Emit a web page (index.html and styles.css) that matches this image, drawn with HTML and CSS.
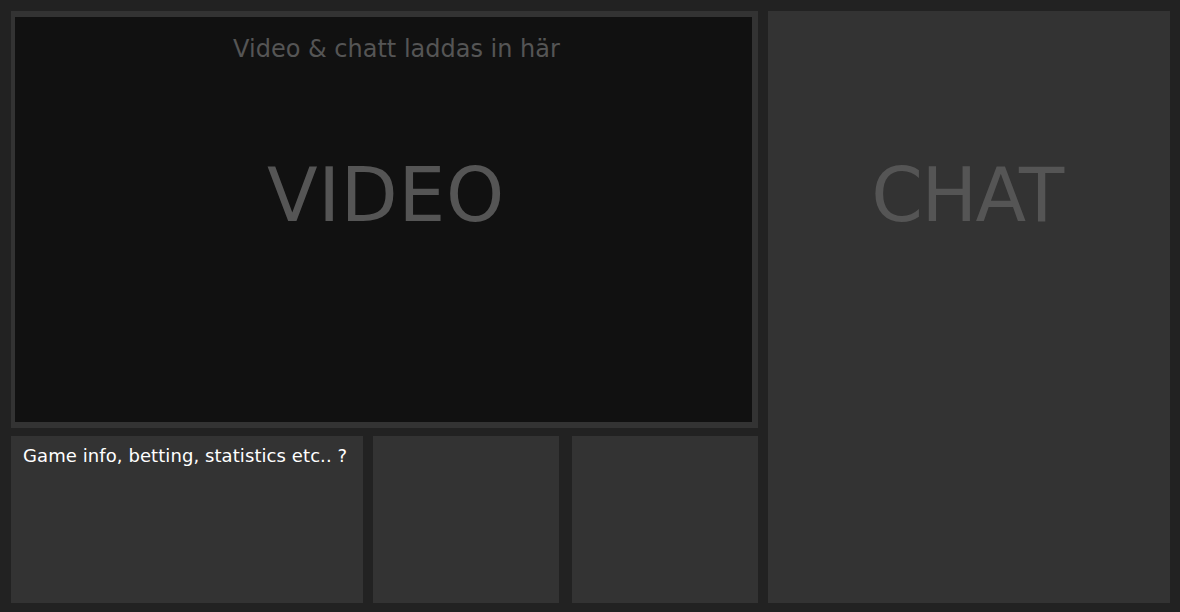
FILE: index.html
```html
<!DOCTYPE html>
<html>
<head>
<meta charset="utf-8">
<link rel="stylesheet" href="styles.css">
</head>
<body>
<div class="page">
  <div class="main">
    <div class="video">
      <div class="video-inner">
        <div class="title">Video &amp; chatt laddas in här</div>
        <div class="big video-label">VIDEO</div>
      </div>
    </div>
    <div class="bottom">
      <div class="box info">Game info, betting, statistics etc.. ?</div>
      <div class="box small"></div>
      <div class="box small last"></div>
    </div>
  </div>
  <div class="chat">
    <div class="big chat-label">CHAT</div>
  </div>
</div>
</body>
</html>
```
FILE: styles.css
```css
html, body {
  margin: 0;
  padding: 0;
  background: #222222;
  font-family: "DejaVu Sans", Verdana, sans-serif;
}
.page {
  width: 1180px;
  height: 612px;
  box-sizing: border-box;
  padding: 11px 10px 9px 11px;
  display: flex;
  gap: 10px;
}
.main {
  width: 747px;
  display: flex;
  flex-direction: column;
  gap: 8px;
}
.video {
  height: 417px;
  box-sizing: border-box;
  border-style: solid;
  border-color: #333333;
  border-width: 6px 6px 6px 4px;
  background: #111111;
}
.video-inner {
  height: 100%;
  display: flex;
  flex-direction: column;
  align-items: center;
}
.title {
  margin-top: 18px;
  padding-left: 26px;
  font-size: 24px;
  line-height: 28px;
  color: #555555;
}
.big {
  font-size: 74px;
  line-height: 86px;
  color: #555555;
  text-align: center;
}
.video-label {
  margin-top: 89px;
  padding-left: 5px;
  letter-spacing: 0.75px;
}
.chat-label {
  padding-right: 4px;
  letter-spacing: -1.5px;
}
.bottom {
  flex: 1;
  display: flex;
}
.box {
  background: #333333;
}
.info {
  width: 352px;
  box-sizing: border-box;
  padding: 9px 12px;
  color: #ffffff;
  font-size: 18px;
  line-height: 21px;
  letter-spacing: 0.08px;
}
.small {
  width: 186px;
  margin-left: 10px;
}
.small.last {
  margin-left: 13px;
}
.chat {
  flex: 1;
  background: #333333;
  padding-top: 141px;
}
```
